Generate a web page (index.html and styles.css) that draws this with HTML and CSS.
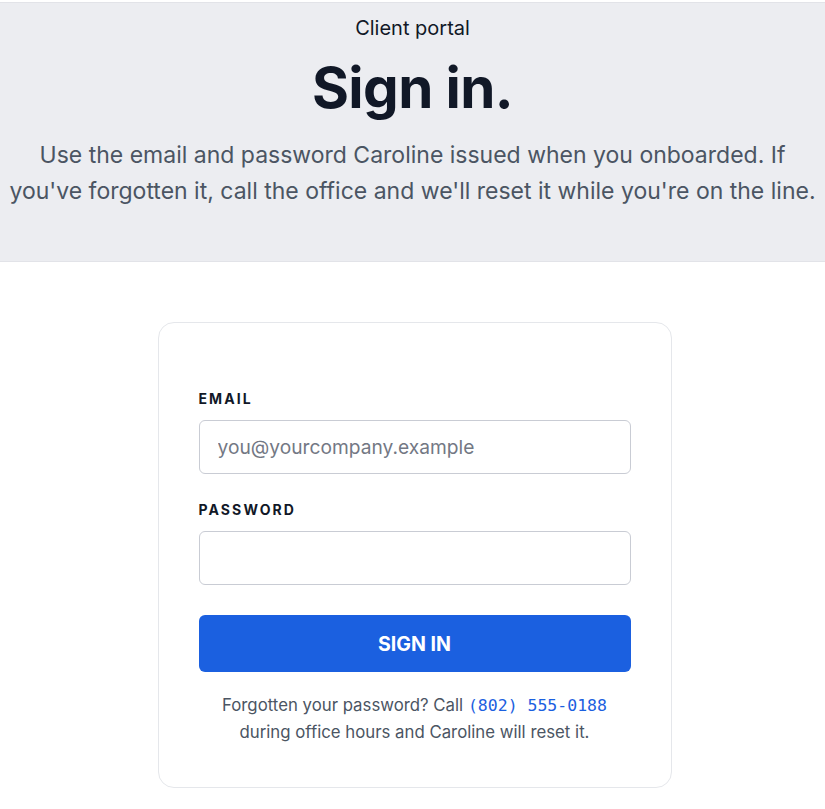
FILE: index.html
```html
<!DOCTYPE html>
<html lang="en">
<head>
<meta charset="utf-8">
<title>Client portal — Sign in</title>
<link rel="stylesheet" href="styles.css">
</head>
<body>
<header class="hero">
  <p class="eyebrow">Client portal</p>
  <h1 class="title">Sign in.</h1>
  <p class="lede">Use the email and password Caroline issued when you onboarded. If you've forgotten it, call the office and we'll reset it while you're on the line.</p>
</header>
<main class="main">
  <form class="card">
    <label class="label" for="email">Email</label>
    <input class="input" id="email" type="email" placeholder="you@yourcompany.example">
    <label class="label label-gap" for="password">Password</label>
    <input class="input" id="password" type="password">
    <button class="button" type="button">Sign in</button>
    <p class="help">Forgotten your password? Call <span class="phone">(802) 555-0188</span><br>during office hours and Caroline will reset it.</p>
  </form>
</main>
</body>
</html>
```
FILE: styles.css
```css
* { box-sizing: border-box; }
html, body { margin: 0; padding: 0; background: #ffffff; }
body {
  font-family: Inter, "Liberation Sans", sans-serif;
  color: #111827;
  padding-top: 2px;
}
.hero {
  background: #ecedf1;
  border-top: 1px solid #e2e3e8;
  border-bottom: 1px solid #e2e3e8;
  text-align: center;
  padding: 13px 6px 0;
  height: 260px;
}
.eyebrow {
  margin: 0;
  font-size: 20px;
  line-height: 24px;
  color: #111827;
}
.title {
  margin: 16px 0 0;
  font-size: 56.5px;
  line-height: 64px;
  font-weight: 700;
  color: #111827;
  letter-spacing: -0.6px;
}
.lede {
  margin: 17px 0 0;
  font-size: 23px;
  line-height: 36px;
  color: #4b5563;
}
.main {
  display: flex;
  justify-content: center;
  padding: 60px 0 0 4px;
}
.card {
  width: 514px;
  background: #ffffff;
  border: 1px solid #e5e7eb;
  border-radius: 16px;
  padding: 66px 40px 41px;
  display: flex;
  flex-direction: column;
}
.label {
  font-size: 14px;
  line-height: 20px;
  font-weight: 700;
  letter-spacing: 2.1px;
  text-transform: uppercase;
  color: #111827;
}
.label-gap { margin-top: 26px; }
.input {
  margin-top: 11px;
  height: 54px;
  width: 100%;
  border: 1px solid #c9ccd4;
  border-radius: 6px;
  padding: 0 18px;
  font-family: inherit;
  font-size: 19.2px;
  color: #111827;
  background: #ffffff;
}
.input::placeholder { color: #737884; }
.button {
  margin-top: 30px;
  height: 57px;
  border: 0;
  border-radius: 6px;
  background: #1b60e0;
  color: #ffffff;
  font-family: inherit;
  font-size: 19.6px;
  font-weight: 700;
  text-transform: uppercase;
  letter-spacing: 0;
}
.help {
  margin: 20px 0 0;
  text-align: center;
  font-size: 16.8px;
  line-height: 27px;
  color: #4b5563;
}
.phone {
  font-family: "DejaVu Sans Mono", "Liberation Mono", monospace;
  font-size: 16.5px;
  color: #1b60e0;
}
```
